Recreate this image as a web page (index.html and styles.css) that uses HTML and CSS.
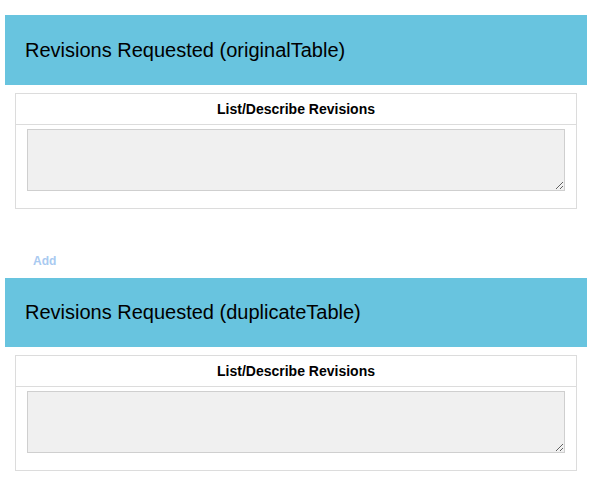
FILE: index.html
```html
<!DOCTYPE html>
<html>
<head>
<meta charset="utf-8">
<link rel="stylesheet" href="styles.css">
</head>
<body>
<div class="page">
  <section class="block">
    <div class="panel-heading">Revisions Requested (originalTable)</div>
    <table class="rev-table">
      <thead><tr><th>List/Describe Revisions</th></tr></thead>
      <tbody><tr><td><textarea class="rev-input"></textarea></td></tr></tbody>
    </table>
  </section>
  <div class="add-row"><a class="add-link">Add</a></div>
  <section class="block block-dup">
    <div class="panel-heading">Revisions Requested (duplicateTable)</div>
    <table class="rev-table">
      <thead><tr><th>List/Describe Revisions</th></tr></thead>
      <tbody><tr><td><textarea class="rev-input"></textarea></td></tr></tbody>
    </table>
  </section>
</div>
</body>
</html>
```

FILE: styles.css
```css
html, body {
  margin: 0;
  padding: 0;
  background: #fff;
}
body {
  font-family: "Liberation Sans", Arial, sans-serif;
  color: #000;
}
.page {
  padding: 15px 9px 0 5px;
}
.panel-heading {
  height: 70px;
  background: #68c4df;
  display: flex;
  align-items: center;
  padding-left: 20px;
  font-size: 20px;
  box-sizing: border-box;
}
.block-dup .panel-heading {
  height: 69px;
}
.rev-table {
  margin: 8px 10px 0 10px;
  width: calc(100% - 20px);
  border-collapse: collapse;
  border: 1px solid #dcdcdc;
}
.rev-table th {
  height: 30px;
  padding: 0;
  font-size: 14px;
  font-weight: bold;
  text-align: center;
  border-bottom: 1px solid #dcdcdc;
}
.rev-table td {
  padding: 4px 11px 17px 11px;
  height: 62px;
}
.rev-input {
  display: block;
  box-sizing: border-box;
  width: 100%;
  height: 62px;
  margin: 0;
  background: #f0f0f0;
  border: 1px solid #cfcfcf;
  font-family: "Liberation Sans", Arial, sans-serif;
}
.add-row {
  height: 69px;
  display: flex;
  align-items: flex-end;
  padding-left: 28px;
  padding-bottom: 10px;
  box-sizing: border-box;
}
.add-link {
  font-size: 12px;
  font-weight: bold;
  color: #a9caf1;
  line-height: 14px;
}
```
